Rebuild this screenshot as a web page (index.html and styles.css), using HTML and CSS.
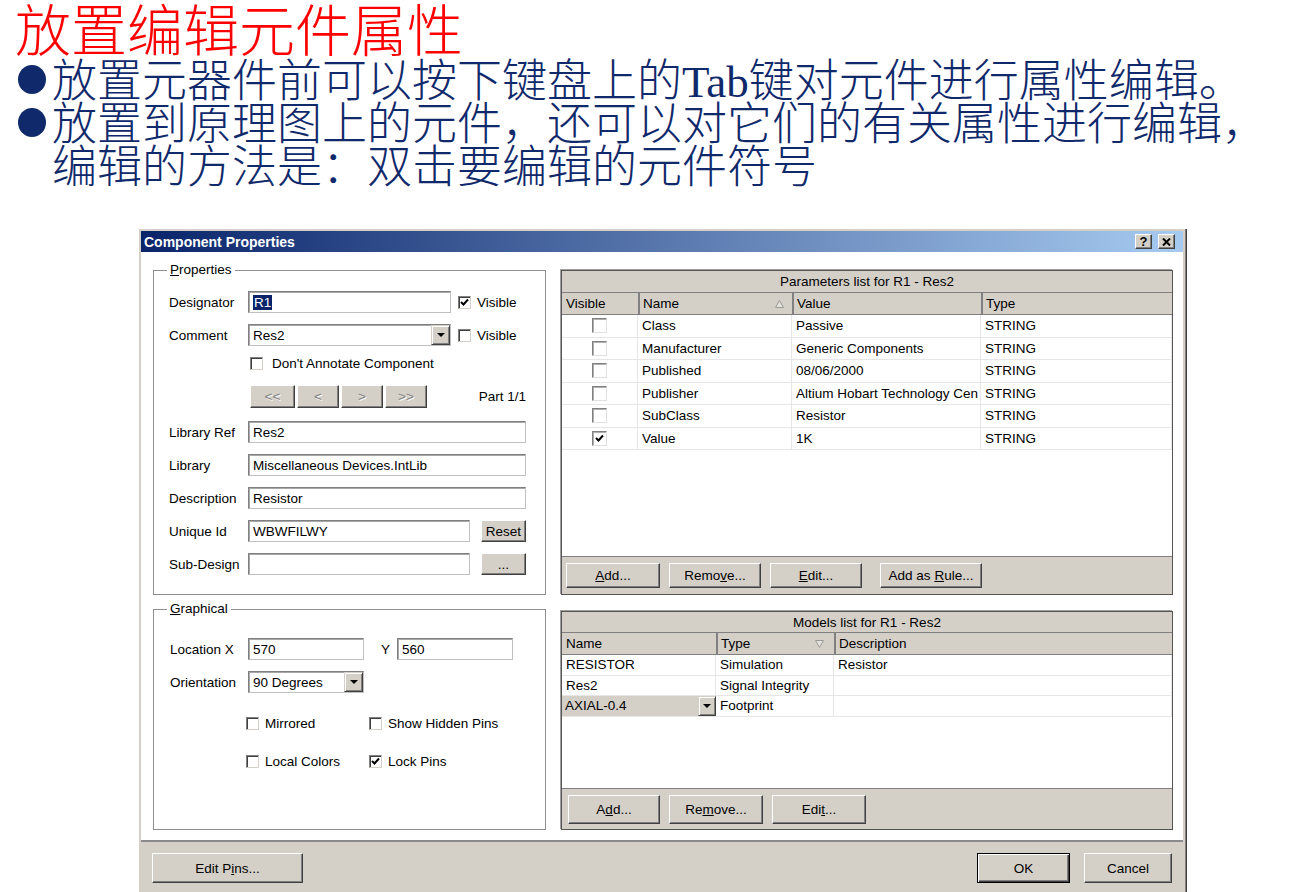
FILE: index.html
```html
<!DOCTYPE html>
<html lang="zh-CN">
<head>
  <meta charset="UTF-8" />
  <title>放置编辑元件属性</title>
  <link rel="stylesheet" href="styles.css">
</head>
<body>
  <div class="slide">
    <h1 class="slide-title">放置编辑元件属性</h1>
    <ul class="points">
      <li>放置元器件前可以按下键盘上的<span class="latin">Tab</span>键对元件进行属性编辑。</li>
      <li>放置到原理图上的元件，还可以对它们的有关属性进行编辑，<br>编辑的方法是：双击要编辑的元件符号</li>
    </ul>
  </div>

  <div class="dialog">
    <div class="titlebar">
      <span class="caption">Component Properties</span>
      <span class="tb-btn help">?</span>
      <span class="tb-btn">
        <svg width="9" height="8" viewBox="0 0 9 8"><path d="M1 0.5 L8 7.5 M8 0.5 L1 7.5" stroke="#000" stroke-width="2"/></svg>
      </span>
    </div>

    <div class="dlg-body">
      <div class="col-left">
        <fieldset class="group">
          <legend><u>P</u>roperties</legend>
          <div class="group-inner props">
            <div class="row">
              <span class="lbl">Designator</span>
              <span class="field w203"><span class="sel">R1</span></span>
              <span class="check-item ml7">
                <span class="cb"><svg width="9" height="9" viewBox="0 0 9 9"><path d="M1 4 L3.5 6.5 L8 1.5" stroke="#000" stroke-width="2" fill="none"/></svg></span><span>Visible</span>
              </span>
            </div>
            <div class="row">
              <span class="lbl">Comment</span>
              <span class="field combo w203">Res2<span class="drop"><i class="tri"></i></span></span>
              <span class="check-item ml7"><span class="cb"></span><span>Visible</span></span>
            </div>
            <div class="row annotate">
              <span class="check-item wide-gap"><span class="cb"></span><span>Don't Annotate Component</span></span>
            </div>
            <div class="row nav">
              <span class="btn off w45">&lt;&lt;</span>
              <span class="btn off w42">&lt;</span>
              <span class="btn off w42">&gt;</span>
              <span class="btn off w42">&gt;&gt;</span>
              <span class="part">Part 1/1</span>
            </div>
            <div class="row">
              <span class="lbl">Library Ref</span>
              <span class="field w278">Res2</span>
            </div>
            <div class="row">
              <span class="lbl">Library</span>
              <span class="field w278">Miscellaneous Devices.IntLib</span>
            </div>
            <div class="row">
              <span class="lbl">Description</span>
              <span class="field w278">Resistor</span>
            </div>
            <div class="row">
              <span class="lbl">Unique Id</span>
              <span class="field w222">WBWFILWY</span>
              <span class="btn side">Reset</span>
            </div>
            <div class="row">
              <span class="lbl">Sub-Design</span>
              <span class="field w222"></span>
              <span class="btn side">...</span>
            </div>
          </div>
        </fieldset>

        <fieldset class="group graphical">
          <legend><u>G</u>raphical</legend>
          <div class="group-inner graph">
            <div class="row">
              <span class="lbl">Location X</span>
              <span class="field w116">570</span>
              <span class="ylbl">Y</span>
              <span class="field w116">560</span>
            </div>
            <div class="row">
              <span class="lbl">Orientation</span>
              <span class="field combo w116">90 Degrees<span class="drop"><i class="tri"></i></span></span>
            </div>
            <div class="row opts first">
              <span class="check-item opt"><span class="cb"></span><span>Mirrored</span></span>
              <span class="check-item opt"><span class="cb"></span><span>Show Hidden Pins</span></span>
            </div>
            <div class="row opts second">
              <span class="check-item opt"><span class="cb"></span><span>Local Colors</span></span>
              <span class="check-item opt">
                <span class="cb"><svg width="9" height="9" viewBox="0 0 9 9"><path d="M1 4 L3.5 6.5 L8 1.5" stroke="#000" stroke-width="2" fill="none"/></svg></span><span>Lock Pins</span>
              </span>
            </div>
          </div>
        </fieldset>
      </div>

      <div class="col-right">
        <div class="panel params">
          <div class="panel-cap">Parameters list for R1 - Res2</div>
          <div class="grid-head cols-params">
            <span class="hc">Visible</span>
            <span class="hc sep">Name
              <svg class="sort" width="9" height="8" viewBox="0 0 9 8"><path d="M0.5 7.5 L4.5 0.5 L8.5 7.5 Z" fill="#e4e2dc" stroke="#9c9a94"/></svg>
            </span>
            <span class="hc sep">Value</span>
            <span class="hc sep">Type</span>
          </div>
          <div class="grid-body">
            <div class="grid-row cols-params">
              <span class="gc mid"><span class="cb flat"></span></span>
              <span class="gc">Class</span><span class="gc">Passive</span><span class="gc">STRING</span>
            </div>
            <div class="grid-row cols-params">
              <span class="gc mid"><span class="cb flat"></span></span>
              <span class="gc">Manufacturer</span><span class="gc">Generic Components</span><span class="gc">STRING</span>
            </div>
            <div class="grid-row cols-params">
              <span class="gc mid"><span class="cb flat"></span></span>
              <span class="gc">Published</span><span class="gc">08/06/2000</span><span class="gc">STRING</span>
            </div>
            <div class="grid-row cols-params">
              <span class="gc mid"><span class="cb flat"></span></span>
              <span class="gc">Publisher</span><span class="gc">Altium Hobart Technology Cen</span><span class="gc">STRING</span>
            </div>
            <div class="grid-row cols-params">
              <span class="gc mid"><span class="cb flat"></span></span>
              <span class="gc">SubClass</span><span class="gc">Resistor</span><span class="gc">STRING</span>
            </div>
            <div class="grid-row cols-params">
              <span class="gc mid"><span class="cb flat"><svg width="9" height="9" viewBox="0 0 9 9"><path d="M1 4 L3.5 6.5 L8 1.5" stroke="#000" stroke-width="2" fill="none"/></svg></span></span>
              <span class="gc">Value</span><span class="gc">1K</span><span class="gc">STRING</span>
            </div>
          </div>
          <div class="btn-bar">
            <span class="btn w94"><span><u>A</u>dd...</span></span>
            <span class="btn w92"><span>Remo<u>v</u>e...</span></span>
            <span class="btn w92"><span><u>E</u>dit...</span></span>
            <span class="btn w102 gap-l"><span>Add as <u>R</u>ule...</span></span>
          </div>
        </div>

        <div class="panel models">
          <div class="panel-cap">Models list for R1 - Res2</div>
          <div class="grid-head cols-models">
            <span class="hc">Name</span>
            <span class="hc sep">Type
              <svg class="sort" width="9" height="8" viewBox="0 0 9 8"><path d="M0.5 0.5 L8.5 0.5 L4.5 7.5 Z" fill="#e4e2dc" stroke="#9c9a94"/></svg>
            </span>
            <span class="hc sep">Description</span>
          </div>
          <div class="grid-body">
            <div class="grid-row cols-models">
              <span class="gc">RESISTOR</span><span class="gc">Simulation</span><span class="gc">Resistor</span>
            </div>
            <div class="grid-row cols-models">
              <span class="gc">Res2</span><span class="gc">Signal Integrity</span><span class="gc"></span>
            </div>
            <div class="grid-row cols-models">
              <span class="gc edit-cell">AXIAL-0.4<span class="drop"><i class="tri"></i></span></span>
              <span class="gc">Footprint</span><span class="gc"></span>
            </div>
          </div>
          <div class="btn-bar tall">
            <span class="btn w92"><span>A<u>d</u>d...</span></span>
            <span class="btn w94"><span>Re<u>m</u>ove...</span></span>
            <span class="btn w94"><span>Edi<u>t</u>...</span></span>
          </div>
        </div>
      </div>
    </div>

    <div class="dlg-foot">
      <span class="btn pins"><span>Edit P<u>i</u>ns...</span></span>
      <span class="btn ok">OK</span>
      <span class="btn cancel">Cancel</span>
    </div>
  </div>
</body>
</html>
```

FILE: styles.css
```css
* { margin: 0; padding: 0; box-sizing: border-box; }
html, body { height: 100%; overflow: hidden; }
body {
  background: #fff;
  font-family: 'Liberation Sans', Arial, sans-serif;
}

/* slide text */
.slide { height: 229px; }
.slide-title {
  font-family: 'Noto Sans CJK SC', sans-serif;
  font-weight: 300;
  font-size: 56px;
  line-height: 54px;
  color: #ff0000;
  padding-left: 15px;
}
.points {
  list-style: none;
  margin-top: 2px;
  font-family: 'Noto Sans CJK SC', sans-serif;
  font-weight: 300;
  font-size: 45px;
  line-height: 43px;
  color: #10296b;
}
.points li {
  margin-left: 18px;
  padding-left: 34px;
  text-indent: -34px;
}
.points li::before {
  content: "";
  display: inline-block;
  width: 28px;
  height: 29px;
  border-radius: 50%;
  background: #10296b;
  margin-right: 6px;
  vertical-align: 3px;
}
.latin { font-family: 'Liberation Serif', serif; font-weight: normal; line-height: 0; }

/* dialog frame */
.dialog {
  margin-left: 139px;
  width: 1046px;
  background: #d4d0c8;
  border-left: 2px solid #d4d0c8;
  border-top: 2px solid #d4d0c8;
  border-right: 2px solid #d4d0c8;
  box-shadow: 1px 0 0 #808080, 2px 0 0 #404040;
  font-size: 13.5px;
  color: #000;
}
.titlebar {
  height: 21px;
  display: flex;
  align-items: center;
  padding: 0 8px 0 3px;
  background: linear-gradient(to right, #0a246a, #a6caf0);
}
.caption {
  color: #fff;
  font-weight: bold;
  font-size: 14px;
}
.tb-btn {
  width: 17px;
  height: 15px;
  display: flex;
  align-items: center;
  justify-content: center;
  background: #d4d0c8;
  border: 1px solid;
  border-color: #fff #404040 #404040 #fff;
  box-shadow: inset -1px -1px #808080;
  font-weight: bold;
  font-size: 13px;
  margin-left: 6px;
}
.tb-btn.help { margin-left: auto; }

.dlg-body {
  background: #fff;
  padding: 10px 10px 10px 12px;
  display: grid;
  grid-template-columns: 393px 612px;
  column-gap: 15px;
  border-bottom: 2px solid #8a8a8a;
}

/* group boxes */
.col-left { display: flex; flex-direction: column; }
.group {
  border: 1px solid #8f8f8f;
  padding: 0;
  margin: 0;
  min-width: 0;
}
.group legend {
  margin-left: 13px;
  padding: 0 3px;
  line-height: 16px;
}
.group.graphical { margin-top: 6px; flex: 1; }
.group-inner { display: flex; flex-direction: column; gap: 11px; }
.props { padding: 13px 19px 19px 15px; }
.graph { padding: 21px 19px 0 16px; }

.row {
  height: 22px;
  display: flex;
  align-items: center;
}
.row.annotate { margin-top: -5px; padding-left: 81px; }
.row.nav { margin-bottom: 2px; padding-left: 81px; height: 23px; }
.row.opts { padding-left: 76px; }
.row.opts.first { margin-top: 8px; }
.row.opts.second { margin-top: 5px; }

.lbl { width: 79px; flex-shrink: 0; }
.graph .lbl { width: 78px; }
.ylbl { width: 33px; padding-left: 17px; }

.field {
  height: 22px;
  display: flex;
  align-items: center;
  padding-left: 4px;
  background: #fff;
  border: 1px solid;
  border-color: #808080 #c0c0c0 #c0c0c0 #808080;
  box-shadow: inset 1px 1px #a8a8a8;
  white-space: nowrap;
  overflow: hidden;
}
.w116 { width: 116px; }
.w203 { width: 203px; }
.w222 { width: 222px; }
.w278 { width: 278px; }
.sel { background: #0a246a; color: #fff; padding: 0 1px; line-height: 15px; }

.drop {
  margin-left: auto;
  width: 19px;
  height: 100%;
  flex-shrink: 0;
  display: flex;
  align-items: center;
  justify-content: center;
  background: #d4d0c8;
  border: 1px solid;
  border-color: #d4d0c8 #404040 #404040 #d4d0c8;
  box-shadow: inset 1px 1px #fff, inset -1px -1px #808080;
}
.tri {
  width: 0;
  height: 0;
  border-left: 4px solid transparent;
  border-right: 4px solid transparent;
  border-top: 4px solid #000;
}

.check-item { display: inline-flex; align-items: center; gap: 6px; white-space: nowrap; }
.check-item.wide-gap { gap: 9px; }
.check-item.opt { min-width: 123px; }
.ml7 { margin-left: 7px; }
.cb {
  width: 13px;
  height: 13px;
  flex-shrink: 0;
  display: inline-flex;
  align-items: center;
  justify-content: center;
  background: #fff;
  border: 1px solid;
  border-color: #808080 #d4d0c8 #d4d0c8 #808080;
  box-shadow: inset 1px 1px #404040;
}
.cb.flat { width: 15px; height: 15px; box-shadow: inset 1px 1px #b0b0b0; border-color: #808080 #e0e0e0 #e0e0e0 #808080; }

/* buttons */
.btn {
  display: inline-flex;
  align-items: center;
  justify-content: center;
  height: 100%;
  flex-shrink: 0;
  background: #d4d0c8;
  border: 1px solid;
  border-color: #fff #404040 #404040 #fff;
  box-shadow: inset -1px -1px #808080;
  white-space: nowrap;
}
.btn.off { color: #808080; text-shadow: 1px 1px #fff; margin-right: 2px; }
.w42 { width: 42px; }
.w45 { width: 45px; }
.w92 { width: 92px; }
.w94 { width: 94px; }
.w102 { width: 102px; }
.part { margin-left: auto; }
.btn.side { width: 45px; margin-left: 11px; }

/* list panels */
.col-right { display: flex; flex-direction: column; padding-top: 8px; gap: 16px; }
.panel {
  display: flex;
  flex-direction: column;
  border: 1px solid #555;
  box-shadow: -1px -1px 0 #a0a0a0;
  background: #fff;
}
.panel.params { height: 325px; }
.panel.models { height: 219px; }
.panel-cap {
  height: 22px;
  display: flex;
  align-items: center;
  justify-content: center;
  background: #d4d0c8;
  border-bottom: 1px solid #808080;
}
.models .panel-cap { height: 21px; }
.grid-head {
  height: 22px;
  background: #d4d0c8;
  border-bottom: 1px solid #808080;
}
.cols-params { display: grid; grid-template-columns: 76px 154px 189px 1fr; }
.cols-models { display: grid; grid-template-columns: 154px 118px 1fr; }
.hc {
  display: flex;
  align-items: center;
  padding-left: 4px;
}
.hc.sep { border-left: 2px solid #808080; padding-left: 3px; }
.sort { margin-left: auto; margin-right: 8px; }
.models .sort { margin-right: 10px; }

.grid-body { flex: 1; }
.grid-row {
  height: 22.5px;
  border-bottom: 1px solid #e6e6e6;
}
.models .grid-row { height: 20.5px; }
.gc {
  display: flex;
  align-items: center;
  padding-left: 4px;
  border-right: 1px solid #e6e6e6;
  white-space: nowrap;
  overflow: hidden;
}
.gc.mid { justify-content: center; padding-left: 0; }
.gc.edit-cell { background: #d4d0c8; padding-left: 3px; border-right: none; }
.gc.edit-cell .drop { width: 18px; }

.btn-bar {
  height: 38px;
  display: flex;
  gap: 9px;
  padding: 6px 4px;
  background: #d4d0c8;
  border-top: 1px solid #808080;
}
.btn-bar.tall { height: 41px; padding: 6px 6px 5px; }
.btn.gap-l { margin-left: 9px; }

/* footer */
.dlg-foot {
  height: 52px;
  display: flex;
  padding: 11px;
}
.btn.pins { width: 151px; height: 30px; }
.btn.ok {
  width: 93px;
  height: 30px;
  margin-left: auto;
  border: 1px solid #000;
  box-shadow: inset 1px 1px #fff, inset -1px -1px #404040, inset -2px -2px #808080;
}
.btn.cancel { width: 88px; height: 30px; margin-left: 14px; }
```
